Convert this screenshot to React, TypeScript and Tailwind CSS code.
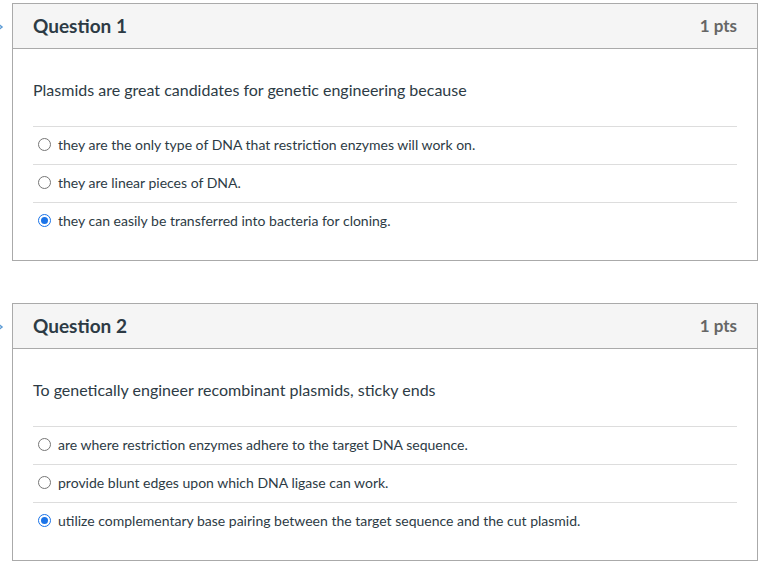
const QUESTIONS = [
  {
    title: 'Question 1',
    points: '1 pts',
    text: 'Plasmids are great candidates for genetic engineering because',
    answers: [
      'they are the only type of DNA that restriction enzymes will work on.',
      'they are linear pieces of DNA.',
      'they can easily be transferred into bacteria for cloning.',
    ],
    selected: 2,
  },
  {
    title: 'Question 2',
    points: '1 pts',
    text: 'To genetically engineer recombinant plasmids, sticky ends',
    answers: [
      'are where restriction enzymes adhere to the target DNA sequence.',
      'provide blunt edges upon which DNA ligase can work.',
      'utilize complementary base pairing between the target sequence and the cut plasmid.',
    ],
    selected: 2,
  },
];

function Radio({ checked }: { checked: boolean }) {
  if (checked) {
    return (
      <span className="flex h-[13px] w-[13px] shrink-0 items-center justify-center rounded-full border-[1.5px] border-[#1a73e8] bg-white">
        <span className="h-[7px] w-[7px] rounded-full bg-[#1a73e8]" />
      </span>
    );
  }
  return <span className="h-[13px] w-[13px] shrink-0 rounded-full border border-[#767676] bg-white" />;
}

function Chevron() {
  return (
    <svg width="10" height="12" viewBox="0 0 10 12" fill="none" stroke="#5b9bd5" strokeWidth="1.5" aria-hidden="true">
      <path d="M2 2l5 4-5 4" />
    </svg>
  );
}

function QuestionCard({ q }: { q: (typeof QUESTIONS)[number] }) {
  return (
    <div className="relative ml-3 w-[746px] border border-[#aaaaaa] bg-white">
      <div className="absolute top-[17px] left-[-18px]">
        <Chevron />
      </div>
      <div className="flex h-[45px] items-center justify-between border-b border-[#aaaaaa] bg-[#f5f5f5] pr-5 pl-5">
        <span className="text-[19px] font-bold text-[#2d3b45]">{q.title}</span>
        <span className="text-[17px] font-bold text-[#666666]">{q.points}</span>
      </div>
      <div className="px-5 pt-[30px] pb-[20px]">
        <p className="text-[16px] leading-[22px] text-[#2d3b45]">{q.text}</p>
        <div className="mt-[25px]">
          {q.answers.map((a, i) => (
            <div key={a} className="flex h-[38px] items-center gap-[7px] border-t border-[#dddddd] pb-[3px] pl-[5px]">
              <Radio checked={i === q.selected} />
              <span className="text-[14px] text-[#2d3b45]">{a}</span>
            </div>
          ))}
        </div>
      </div>
    </div>
  );
}

export default function App() {
  return (
    <div className="h-[575px] w-[769px] overflow-hidden bg-white pt-[3px] font-['Lato','Liberation_Sans',sans-serif]">
      <div className="flex flex-col gap-[42px]">
        {QUESTIONS.map((q) => (
          <QuestionCard key={q.title} q={q} />
        ))}
      </div>
    </div>
  );
}
